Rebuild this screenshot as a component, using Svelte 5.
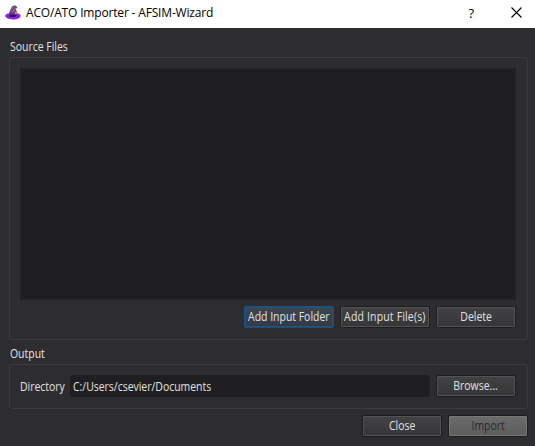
<script>
  let directory = $state('C:/Users/csevier/Documents');
</script>

<div class="window">
  <header>
    <svg class="logo" width="16" height="16" viewBox="0 0 16 16">
      <path d="M3.400 9.500 5.500 4.200 7.200 1.300 10.200.2l2.200 2-.5 1.200-1.500-.3 1.300 3.100 1.700 4.600-4.900 1.700z" fill="#6a4c80" />
      <path d="m7 3.700 1.800-1.500M7 7l2.700-2.500M10.500 7.500l1 1.500" stroke="#9a78ac" stroke-width="1" />
      <path d="M.3 10.300C1.400 8.400 3.300 8.200 4.500 8.500L12 8.200c2.600.4 3.800 1.700 3.700 2.900-.5 2.300-4 3.600-8 3.500C3 14.400-.4 12.400.3 10.300z" fill="#8b20f0" />
      <path d="M3.900 10.400c2-.7 6-.8 7.800-.2.3 1.100-1.500 1.900-3.800 1.900s-4-.7-4-1.700z" fill="#24102e" />
      <path d="M4.500 8.500c2.500 1 5 .5 7.500-1" fill="none" stroke="#4c247c" />
      <path d="M9.700 7.200h2.200v1.800H9.700z" fill="#d8a63c" />
    </svg>
    <span class="title">ACO/ATO Importer - AFSIM-Wizard</span>
    <span class="help">?</span>
    <svg class="x" width="11" height="11" viewBox="0 0 11 11"><path d="m.5.5 10 10m0-10-10 10" stroke="#000" stroke-width="1.100" /></svg>
  </header>
  <main>
    <div class="label"><span class="text left">Source Files</span></div>
    <section class="files">
      <div class="list"></div>
      <div class="row">
        <button class="wide focus"><span class="text">Add Input Folder</span></button>
        <button class="wide"><span class="text file">Add Input File(s)</span></button>
        <button><span class="text">Delete</span></button>
      </div>
    </section>
    <div class="label out"><span class="text left">Output</span></div>
    <section class="output-box">
      <span class="dir"><span class="text left">Directory</span></span>
      <div class="field"><span class="text left">{directory}</span></div>
      <button><span class="text">Browse...</span></button>
    </section>
    <footer>
      <button><span class="text">Close</span></button>
      <button disabled><span class="text">Import</span></button>
    </footer>
  </main>
</div>

<style>
  :global(body) { margin: 0; }
  * { box-sizing: border-box; }
  .window {
    width: 535px; height: 446px; overflow: hidden;
    background: #2d2d2f; color: #e2e2e2;
    font: 12px/16px "Open Sans", "Noto Sans", sans-serif;
  }
  header {
    height: 28px; display: flex; align-items: center; padding: 0 13px 3px 5px;
    background: #fff; color: #000;
  }
  .title { margin-left: 5px; padding-top: 1px; white-space: nowrap; letter-spacing: -0.17px; }
  .help { margin-left: auto; margin-right: 37px; font-size: 13px; font-weight: 500; }
  .text { display: inline-block; white-space: nowrap; transform: scaleX(.87); }
  .left { transform-origin: left center; }
  .file { letter-spacing: .22px; }
  main { padding: 10px 7px 0 9px; }
  .label { height: 19px; padding: 1px 0 0 1px; }
  section { border: 1px solid #3b3b3d; border-radius: 3px; }
  .files { height: 283px; padding: 10px 11px 0 10px; }
  .list { height: 232px; background: #1f1f21; border: 1px solid #232325; }
  .row { display: flex; justify-content: flex-end; gap: 6px; margin-top: 6px; }
  button {
    width: 80px; height: 22px; padding: 0; flex: none;
    display: flex; align-items: center; justify-content: center;
    border: 1px solid #1d1d1f; border-radius: 2px;
    background: linear-gradient(#424244, #363638);
    box-shadow: inset 0 0 0 1px #535355;
    color: #e2e2e2; font: inherit;
  }
  .wide { width: 90px; }
  .focus { border-color: #07549a; background: linear-gradient(#3d4650, #323b45); box-shadow: inset 0 0 0 1px #3c4c5b; }
  button:disabled { background: linear-gradient(#6b6b6c, #5d5d5e); box-shadow: inset 0 0 0 1px #777778; color: #29292d; }
  .out { margin-top: 5px; }
  .output-box { height: 45px; display: flex; align-items: center; padding: 0 11px 1px 10px; }
  .dir { width: 50px; flex: none; padding-top: 1px; }
  .field {
    width: 360px; height: 22px; margin-right: 6px; padding: 4px 2px 0 3px;
    background: #1f1f21; border-radius: 3px;
  }
  footer { display: flex; justify-content: flex-end; gap: 6px; margin-top: 6px; }
</style>
